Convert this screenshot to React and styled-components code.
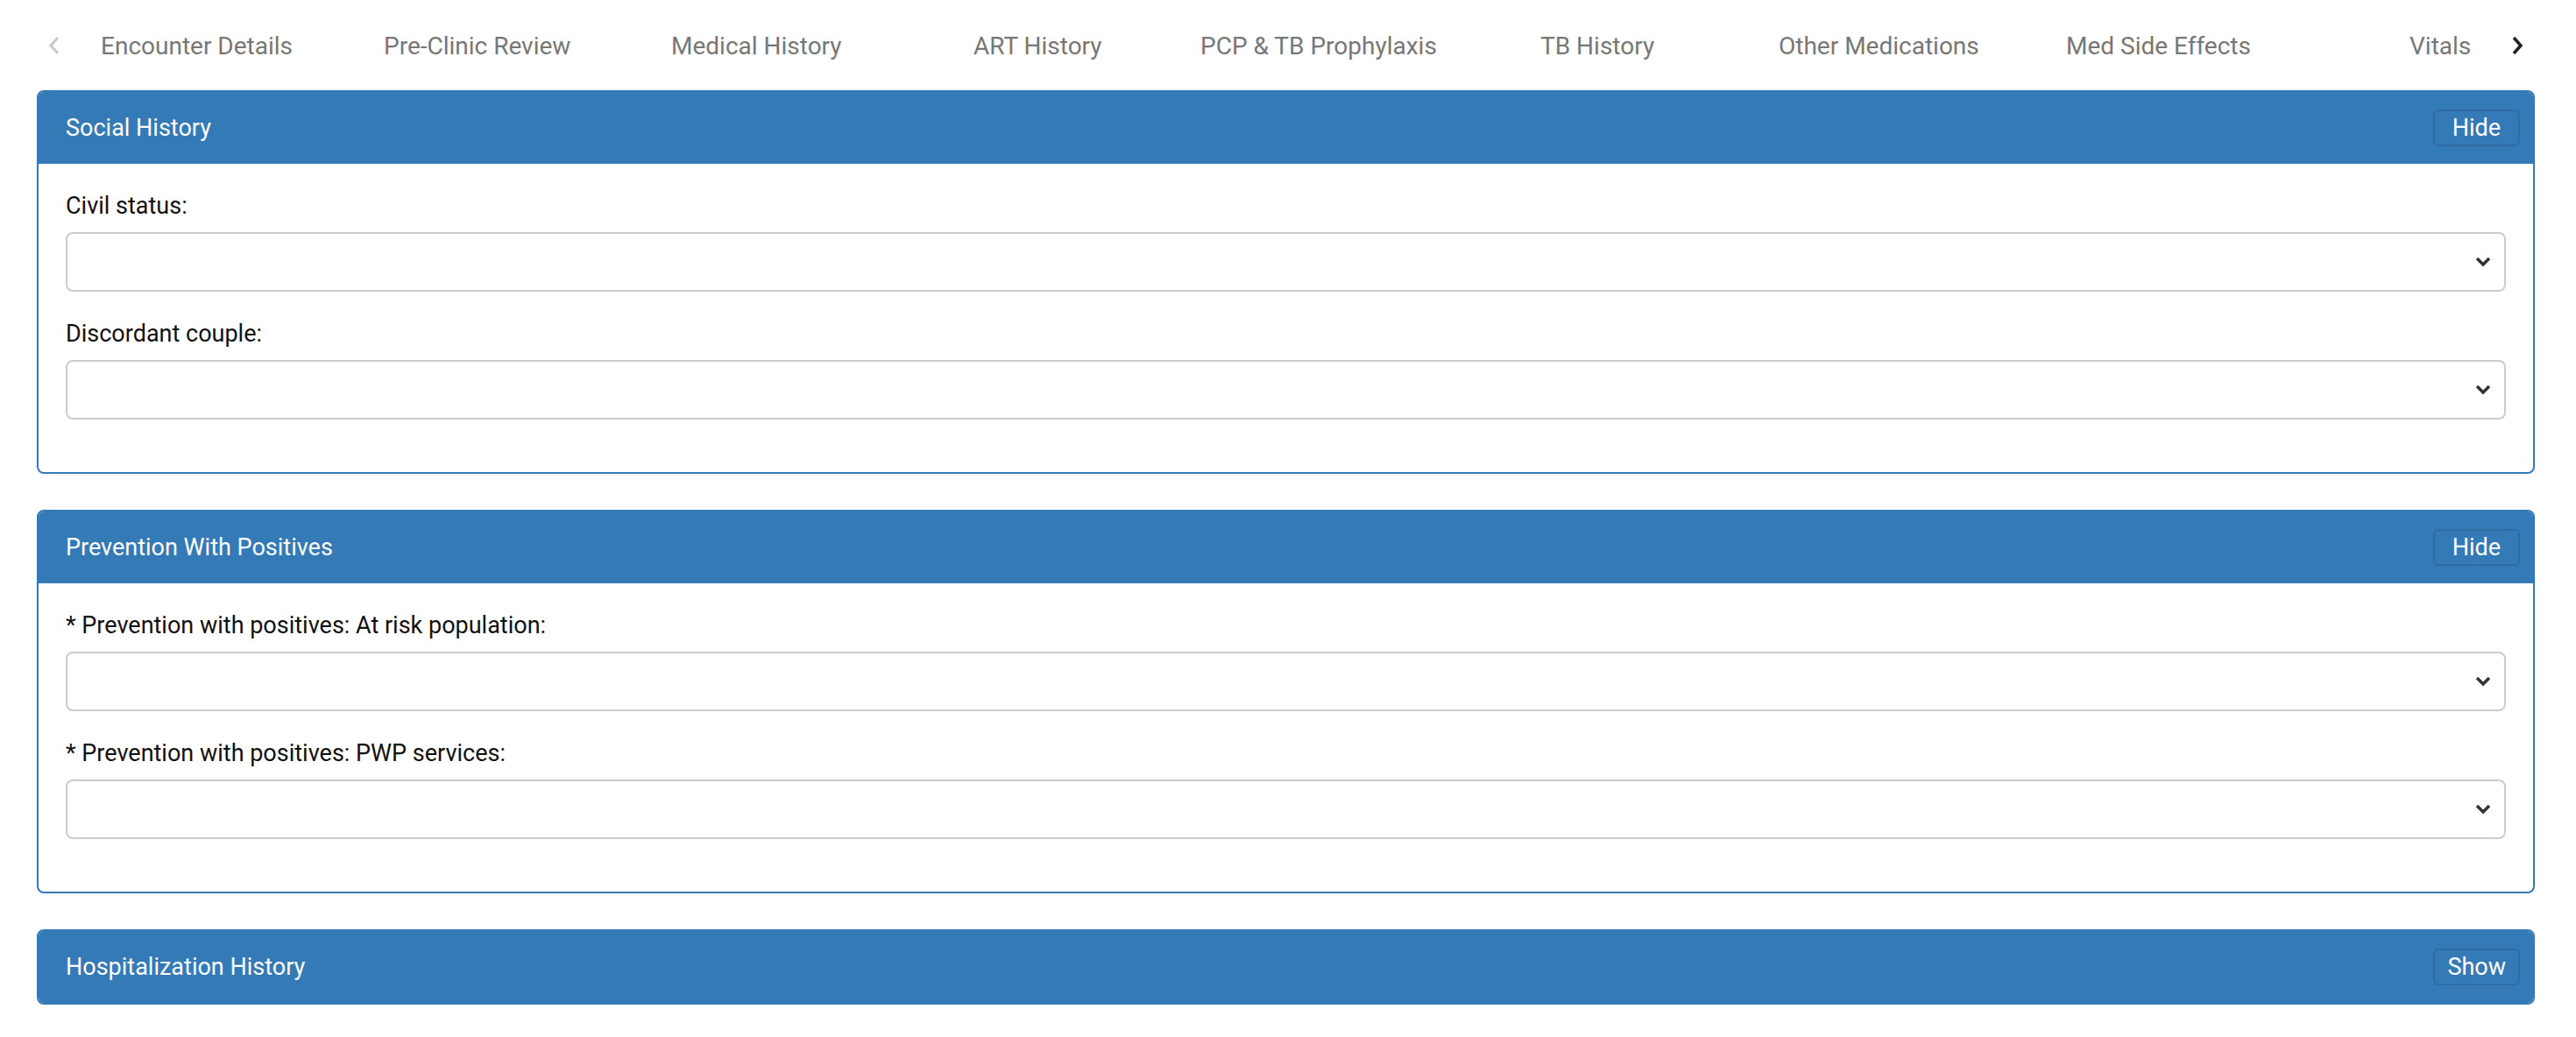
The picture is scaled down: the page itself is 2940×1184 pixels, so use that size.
import React from "react";
import styled, { createGlobalStyle } from "styled-components";

const Global = createGlobalStyle`
  body { margin: 0; background: #fff; font-family: Roboto, "Liberation Sans", sans-serif; }
`;

const Page = styled.div`
  padding: 0 47px 0 42px;
`;

const TabBar = styled.div`
  height: 103px;
  display: flex;
  align-items: center;
  position: relative;
  padding: 0 0 0 0;
  box-sizing: border-box;
`;

const Arrow = styled.div`
  width: 40px;
  display: flex;
  justify-content: center;
  color: ${(p) => (p.$dim ? "#c8c8c8" : "#222")};
  flex: none;
`;

const Tabs = styled.div`
  flex: 1;
  overflow: hidden;
  white-space: nowrap;
  position: relative;
  height: 103px;
`;

const Tab = styled.span`
  position: absolute;
  top: 50%;
  transform: translateY(-50%);
  font-size: 28px;
  color: #777;
`;

const Panel = styled.section`
  border: 2px solid #337ab7;
  border-radius: 8px;
  margin-bottom: 41px;
  overflow: hidden;
`;

const Header = styled.div`
  background: #337ab7;
  height: 82px;
  display: flex;
  align-items: center;
  justify-content: space-between;
  padding: 0 15px 0 31px;
  color: #fff;
  font-size: 27px;
`;

const ToggleButton = styled.button`
  background: #337ab7;
  border: 2px solid #2e6da4;
  border-radius: 6px;
  color: #fff;
  font-family: inherit;
  font-size: 27px;
  height: 42px;
  padding: 0 ${(p) => p.$pad}px;
`;

const Body = styled.div`
  padding: 28px 31px 32px;
`;

const Field = styled.div`
  margin-bottom: 28px;
`;

const Label = styled.div`
  font-size: 27px;
  color: #111;
  line-height: 40px;
  margin-bottom: 10px;
`;

const Select = styled.div`
  height: 64px;
  border: 2px solid #ccc;
  border-radius: 8px;
  display: flex;
  align-items: center;
  justify-content: flex-end;
  padding-right: 14px;
  color: #333;
`;

const Chevron = () => (
  <svg width="20" height="14" viewBox="0 0 20 14">
    <path d="M3 3l7 7 7-7" fill="none" stroke="#333" strokeWidth="3.5" />
  </svg>
);

const tabs = [
  ["Encounter Details", 115],
  ["Pre-Clinic Review", 438],
  ["Medical History", 766],
  ["ART History", 1111],
  ["PCP & TB Prophylaxis", 1370],
  ["TB History", 1758],
  ["Other Medications", 2030],
  ["Med Side Effects", 2358],
  ["Vitals", 2750],
];

const SectionPanel = ({ title, open, fields }) => (
  <Panel>
    <Header>
      <span>{title}</span>
      <ToggleButton $pad={open ? 20 : 14}>{open ? "Hide" : "Show"}</ToggleButton>
    </Header>
    {open && (
      <Body>
        {fields.map((f) => (
          <Field key={f}>
            <Label>{f}</Label>
            <Select>
              <Chevron />
            </Select>
          </Field>
        ))}
      </Body>
    )}
  </Panel>
);

export default function App() {
  return (
    <>
      <Global />
      <Page>
        <TabBar>
          <Arrow $dim>
            <svg width="14" height="24" viewBox="0 0 14 24">
              <path d="M11 3L3 12l8 9" fill="none" stroke="#c8c8c8" strokeWidth="3" />
            </svg>
          </Arrow>
          <Tabs style={{ width: 2778 }}>
            {tabs.map(([t, x]) => (
              <Tab key={t} style={{ left: x - 82 }}>{t}</Tab>
            ))}
          </Tabs>
          <Arrow>
            <svg width="14" height="24" viewBox="0 0 14 24">
              <path d="M3 3l8 9-8 9" fill="none" stroke="#222" strokeWidth="3.5" />
            </svg>
          </Arrow>
        </TabBar>
        <SectionPanel title="Social History" open fields={["Civil status:", "Discordant couple:"]} />
        <SectionPanel
          title="Prevention With Positives"
          open
          fields={["* Prevention with positives: At risk population:", "* Prevention with positives: PWP services:"]}
        />
        <SectionPanel title="Hospitalization History" />
      </Page>
    </>
  );
}
